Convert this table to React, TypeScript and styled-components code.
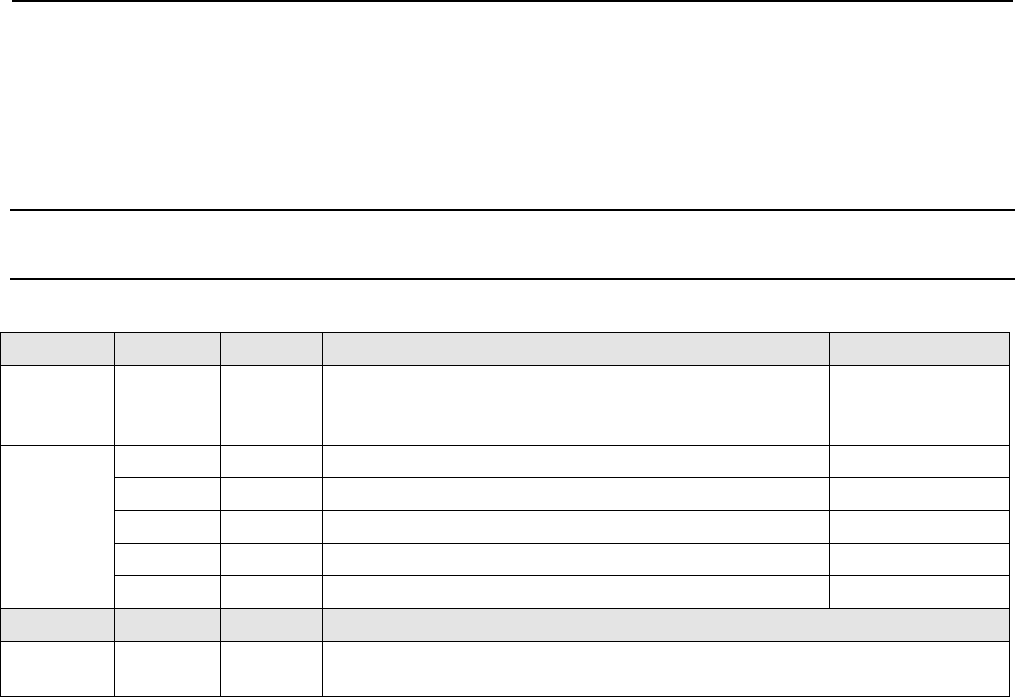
import React, { FC } from "react";
import styled, { createGlobalStyle } from "styled-components";

const GlobalStyle = createGlobalStyle`
  html, body {
    margin: 0;
    padding: 0;
    background: #fff;
    font-family: "Liberation Sans", Arial, sans-serif;
  }
`;

const Page = styled.div`
  width: 1019px;
  height: 697px;
  overflow: hidden;
  background: #fff;
`;

const TopRule = styled.div`
  height: 2px;
  margin: 0 6px 0 12px;
  background: #000;
`;

const Band = styled.div`
  height: 67px;
  margin: 207px 4px 0 10px;
  border-top: 2px solid #000;
  border-bottom: 2px solid #000;
`;

const Grid = styled.table`
  margin-top: 52px;
  width: 1009px;
  border-collapse: collapse;
  table-layout: fixed;
  border: 1px solid #000;
`;

const Row = styled.tr<{ $h: number; $shaded?: boolean }>`
  height: ${(p) => p.$h}px;
  background: ${(p) => (p.$shaded ? "#e4e4e4" : "#fff")};
`;

const Cell = styled.td`
  border: 1px solid #000;
  padding: 0;
  font-size: 13px;
  vertical-align: top;
`;

const widths = [114, 106, 102, 507, 180];

const App: FC = () => (
  <Page>
    <GlobalStyle />
    <TopRule />
    <Band />
    <Grid>
      <colgroup>
        {widths.map((w, i) => (
          <col key={i} style={{ width: w }} />
        ))}
      </colgroup>
      <tbody>
        <Row $h={33} $shaded>
          <Cell />
          <Cell />
          <Cell />
          <Cell />
          <Cell />
        </Row>
        <Row $h={80}>
          <Cell />
          <Cell />
          <Cell />
          <Cell />
          <Cell />
        </Row>
        <Row $h={32}>
          <Cell rowSpan={5} />
          <Cell />
          <Cell />
          <Cell />
          <Cell />
        </Row>
        {[33, 33, 32, 33].map((h, i) => (
          <Row key={i} $h={h}>
            <Cell />
            <Cell />
            <Cell />
            <Cell />
          </Row>
        ))}
        <Row $h={33} $shaded>
          <Cell />
          <Cell />
          <Cell />
          <Cell colSpan={2} />
        </Row>
        <Row $h={55}>
          <Cell />
          <Cell />
          <Cell />
          <Cell colSpan={2} />
        </Row>
      </tbody>
    </Grid>
  </Page>
);

export default App;
